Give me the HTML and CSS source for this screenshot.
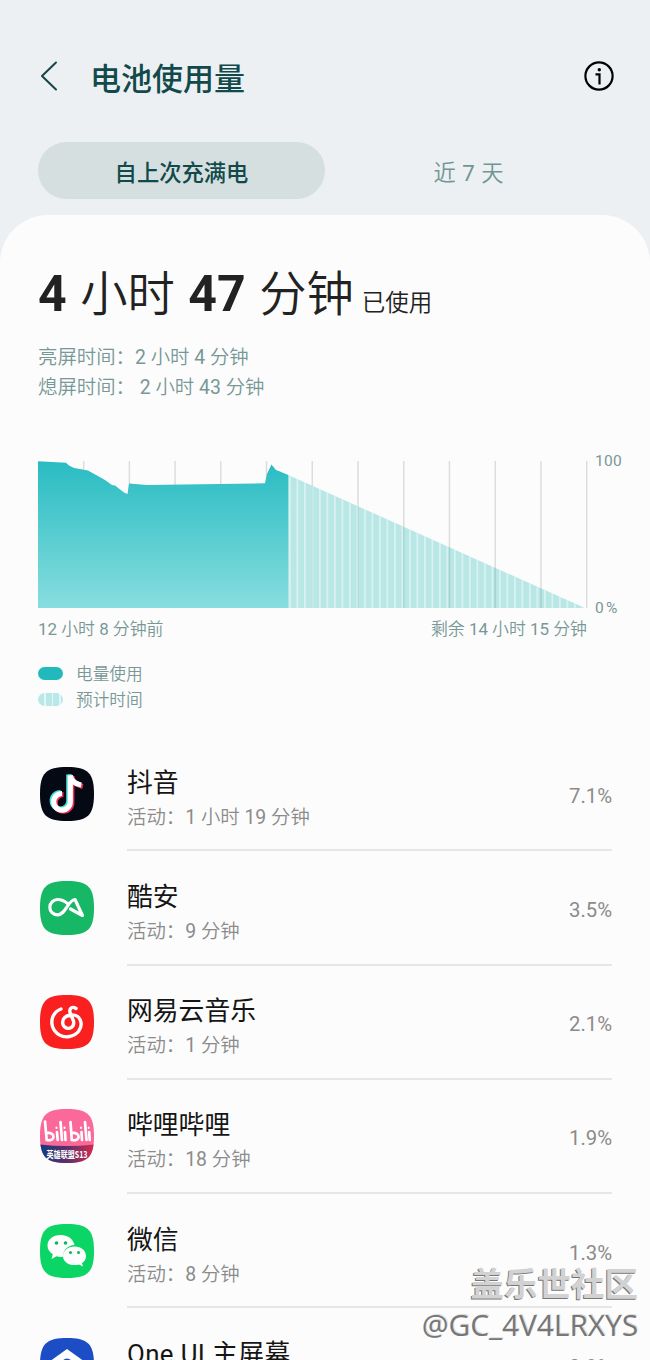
FILE: index.html
```html
<!DOCTYPE html>
<html lang="zh-CN">
<head>
    <meta charset="UTF-8">
    <meta name="viewport" content="width=device-width, initial-scale=1.0">
    <title>电池使用量</title>
    <link rel="stylesheet" href="styles.css">
</head>
<body>

    <div class="header">
        <svg class="back" width="18" height="30" viewBox="0 0 18 30"><path d="M16 1.5 2 15l14 13.5"/></svg>
        <h1>电池使用量</h1>
        <svg class="info" width="30" height="30" viewBox="0 0 30 30">
            <circle cx="15" cy="15" r="13.6"/>
            <path d="M11.5 13.4h4v10.2"/>
            <circle class="dot" cx="15.3" cy="8.7" r="1.7"/>
        </svg>
    </div>

    <div class="tabs">
        <div class="tab active">自上次充满电</div>
        <div class="tab">近 7 天</div>
    </div>

    <div class="content">
        <div class="total"><b>4</b> 小时 <b>47</b> 分钟<span class="used">已使用</span></div>
        <div class="times">
            <p>亮屏时间：2 小时 4 分钟</p>
            <p>熄屏时间： 2 小时 43 分钟</p>
        </div>

        <!-- Graphique de la batterie -->
        <div class="chart">
            <svg width="550" height="148" viewBox="0 0 550 148">
                <defs>
                    <linearGradient id="used" x1="0" y1="0" x2="0" y2="1">
                        <stop offset="0" stop-color="#28bcc2"/>
                        <stop offset="1" stop-color="#88dddf"/>
                    </linearGradient>
                    <clipPath id="remaining"><path d="M250.3 14 547 147H250.3z"/></clipPath>
                </defs>
                <path class="grid" d="M45.7 0v147M91.4 0v147M137.1 0v147M182.8 0v147M228.5 0v147M274.3 0v147M320 0v147M365.8 0v147M411.5 0v147M457.3 0v147M503 0v147M548.8 0v147"/>
                <path fill="url(#used)" d="M0 .3 28 1.8 31 4.5 36 7 50 9.5 67 19 74 24 77 24.5 86 31.5 89.5 33 91 22.5 109 24 227 22.3 229 13 233.5 3.5 238 9 242 10.5 250.3 14V147H0z"/>
                <g clip-path="url(#remaining)">
                    <path fill="#1fb5b0" fill-opacity=".3" d="M250 0h300v147H250z"/>
                    <path class="stripes" d="M251 73.500h300"/>
                </g>
            </svg>
            <div class="scale"><span>100</span><span>0 %</span></div>
        </div>
        <div class="range"><span>12 小时 8 分钟前</span><span>剩余 14 小时 15 分钟</span></div>

        <div class="legend">
            <div><i class="swatch"></i>电量使用</div>
            <div><i class="swatch striped"></i>预计时间</div>
        </div>

        <!-- Liste des applications -->
        <ul class="apps">
            <li>
                <svg class="icon" viewBox="0 0 54 54">
                    <path fill="#050914" d="M27 0C48 0 54 6 54 27S48 54 27 54 0 48 0 27 6 0 27 0z"/>
                    <g fill="none" stroke-width="5.2">
                        <path stroke="#46dcd6" d="M20.500 25.500a8.300 8.300 0 1 0 8.300 8.300V7.500q1.500 8 10 9.500"/>
                        <path stroke="#ec2f58" d="M23.500 27.500a8.300 8.300 0 1 0 8.300 8.300V9.500q1.500 8 11 10"/>
                        <path stroke="#fff" d="M22 26.500a8.300 8.300 0 1 0 8.300 8.300V8.500q1.500 8 11 9.500"/>
                    </g>
                </svg>
                <div class="app">
                    <div><h3>抖音</h3><p>活动：1 小时 19 分钟</p></div>
                    <span>7.1%</span>
                </div>
            </li>
            <li>
                <svg class="icon" viewBox="0 0 54 54">
                    <path fill="#16b765" d="M27 0C48 0 54 6 54 27S48 54 27 54 0 48 0 27 6 0 27 0z"/>
                    <path fill="none" stroke="#fff" stroke-width="3.200" stroke-linejoin="round" stroke-linecap="round" d="M27.500 22.500C24 19.500 21 18.500 17.500 18.500a7.700 7.700 0 0 0 0 15.400C25.500 33.900 28.500 18.500 35 18.500L42.500 34.500 30.500 28"/>
                </svg>
                <div class="app">
                    <div><h3>酷安</h3><p>活动：9 分钟</p></div>
                    <span>3.5%</span>
                </div>
            </li>
            <li>
                <svg class="icon" viewBox="0 0 54 54">
                    <path fill="#f9201f" d="M27 0C48 0 54 6 54 27S48 54 27 54 0 48 0 27 6 0 27 0z"/>
                    <path fill="none" stroke="#fff" stroke-width="3.400" stroke-linecap="round" d="M21 14C13 17 10.500 25 12.500 31.500 15 39 22.500 43 29.500 41.500 37.500 40 42 33.500 41 27.500 40 22 35.500 19.500 31 20c-6 .5-9 4.500-8.200 8.800.8 4 5.200 5.700 8.500 3.700 2.500-1.600 2.700-4 2.200-6.500L30 17.500c-1-4.500 2.500-6.500 6-4"/>
                </svg>
                <div class="app">
                    <div><h3>网易云音乐</h3><p>活动：1 分钟</p></div>
                    <span>2.1%</span>
                </div>
            </li>
            <li>
                <svg class="icon" viewBox="0 0 54 54">
                    <defs>
                        <clipPath id="shape"><path d="M27 0C48 0 54 6 54 27S48 54 27 54 0 48 0 27 6 0 27 0z"/></clipPath>
                        <linearGradient id="banner">
                            <stop offset="0" stop-color="#123b80"/>
                            <stop offset=".5" stop-color="#5b3069"/>
                            <stop offset="1" stop-color="#d32b50"/>
                        </linearGradient>
                    </defs>
                    <g clip-path="url(#shape)">
                        <path fill="#fb699b" d="M0 0h54v54H0z"/>
                        <path fill="url(#banner)" d="M0 35.500q27 3 54 0V54H0z"/>
                    </g>
                    <g fill="none" stroke="#fff" stroke-width="2.700" stroke-linecap="round">
                        <path d="M5 12.500l1.700 18.500c9 2 9-8 .3-7M17 23l.7 8M20.500 13l1.500 18M25 23l.5 8M30.500 13l1.300 18c9 2 9-8 .3-7M41.500 23l.5 8M45 13l1.500 18M49.200 23l.5 8"/>
                        <path stroke-width="2" d="M16.500 18.500v.5M24.500 18.500v.5M41 18.500v.5M48.700 18.500v.5"/>
                    </g>
                    <text class="season" x="27" y="48.500" text-anchor="middle" textLength="41" lengthAdjust="spacingAndGlyphs">英雄联盟S13</text>
                </svg>
                <div class="app">
                    <div><h3>哔哩哔哩</h3><p>活动：18 分钟</p></div>
                    <span>1.9%</span>
                </div>
            </li>
            <li>
                <svg class="icon" viewBox="0 0 54 54">
                    <path fill="#0bd564" d="M27 0C48 0 54 6 54 27S48 54 27 54 0 48 0 27 6 0 27 0z"/>
                    <path fill="#fff" d="M20.500 11C13 11 7.500 15.500 7.500 21.500c0 4 2 6.700 5.300 8.700L11.500 35l5-2.700c2 .5 4 .7 6.500.5 0-7 5-11.300 11.500-11.800C33 14.500 27.500 11 20.500 11z"/>
                    <path fill="#fff" d="M34.500 22.500c6.500 0 11.500 4 11.500 9.500 0 3.200-1.500 5.500-4 7.200l1 3.300-4-2c-1.500.4-3 .6-4.500.6-6.500 0-11.500-4-11.500-9.200s5-9.400 11.500-9.400z"/>
                    <g fill="#0bb65a"><circle cx="16.500" cy="19" r="1.800"/><circle cx="25.500" cy="19" r="1.800"/><circle cx="30.500" cy="28.500" r="1.500"/><circle cx="38.500" cy="28.500" r="1.500"/></g>
                </svg>
                <div class="app">
                    <div><h3>微信</h3><p>活动：8 分钟</p></div>
                    <span>1.3%</span>
                </div>
            </li>
            <li>
                <svg class="icon" viewBox="0 0 54 54">
                    <path fill="#1d4dc5" d="M27 0C48 0 54 6 54 27S48 54 27 54 0 48 0 27 6 0 27 0z"/>
                    <path fill="#fff" d="M27 11 43 22.500V42H11V22.500z"/>
                    <circle cx="27" cy="26" r="5.500" fill="#1d4dc5"/>
                </svg>
                <div class="app">
                    <div><h3 class="latin">One UI 主屏幕</h3></div>
                    <span>0.9%</span>
                </div>
            </li>
        </ul>
    </div>

    <div class="watermark">
        <div class="community">盖乐世社区</div>
        <div class="user">@GC_4V4LRXYS</div>
    </div>

</body>
</html>
```
FILE: styles.css
```css
* {
    box-sizing: border-box;
    margin: 0;
    padding: 0;
}

body {
    position: relative;
    height: 1360px;
    overflow: hidden;
    background-color: #ecf0f3;
    font-family: Roboto, 'Noto Sans CJK SC DemiLight', 'Noto Sans CJK SC', sans-serif;
}

.header {
    height: 142px;
    padding: 55px 36px 0 40px;
    display: flex;
    align-items: flex-start;
}

.header h1 {
    margin: 0 auto 0 32px;
    font-family: Roboto, 'Noto Sans CJK SC', sans-serif;
    font-size: 31px;
    line-height: 49px;
    font-weight: 500;
    color: #124a4b;
}

.back {
    margin-top: 6px;
    fill: none;
    stroke: #164546;
    stroke-width: 2;
    stroke-linecap: round;
    stroke-linejoin: round;
}

.info {
    margin-top: 6px;
    fill: none;
    stroke: #000;
    stroke-width: 2.2;
}

.info .dot {
    fill: #000;
    stroke: none;
}

.tabs {
    display: flex;
    height: 57px;
    margin: 0 38px 16px;
}

.tab {
    width: 287px;
    height: 57px;
    line-height: 62px;
    border-radius: 29px;
    text-align: center;
    font-size: 22.3px;
    word-spacing: 1px;
    color: #6f9693;
}

.tab.active {
    background-color: #d6dfe0;
    font-family: Roboto, 'Noto Sans CJK SC', sans-serif;
    color: #124a4b;
    font-weight: 500;
}

.content {
    height: 1145px;
    overflow: hidden;
    padding: 44px 28px 0 38px;
    background-color: #fcfcfc;
    border-radius: 48px 48px 0 0;
}

.total {
    height: 70px;
    line-height: 70px;
    font-size: 47.3px;
    font-weight: 350;
    word-spacing: 2px;
    color: #222;
    white-space: nowrap;
}

.total b {
    font-size: 50px;
    font-weight: 700;
}

.used {
    margin-left: 8px;
    font-size: 23.5px;
}

.times {
    margin-top: 14px;
    font-size: 19.4px;
    line-height: 30px;
    color: #789897;
}

.chart {
    display: flex;
    margin-top: 58px;
    height: 148px;
}

.grid {
    fill: none;
    stroke: #ddd;
    stroke-width: 1.5;
}

.stripes {
    stroke: #fff;
    stroke-opacity: 0.45;
    stroke-width: 147;
    stroke-dasharray: 1.8 5.7;
}

.scale {
    display: flex;
    flex-direction: column;
    justify-content: space-between;
    margin: -10px 0 -9px 7px;
    font-size: 15.5px;
    line-height: 20px;
    letter-spacing: 0.3px;
    color: #789897;
    white-space: nowrap;
}

.scale span:last-child {
    word-spacing: -2px;
}

.range {
    display: flex;
    justify-content: space-between;
    width: 549px;
    margin-top: 7px;
    font-size: 16.9px;
    line-height: 26px;
    color: #789897;
}

.legend {
    margin-top: 20px;
    font-size: 16.7px;
    line-height: 26px;
    color: #789897;
}

.legend div {
    display: flex;
    align-items: center;
}

.swatch {
    width: 25px;
    height: 13px;
    margin: -4px 13px 0 0;
    border-radius: 7px;
    background-color: #22b9bd;
}

.swatch.striped {
    background: repeating-linear-gradient(90deg, #b9e8e8 0 6px, #e3f6f6 6px 7.5px);
}

.apps {
    margin-top: 23px;
    list-style: none;
}

.apps li {
    display: flex;
    height: 114.3px;
    padding-left: 1.5px;
}

.icon {
    flex: none;
    width: 54px;
    height: 54px;
    margin: 29.5px 33.5px 0 0;
}

.season {
    font-family: 'Noto Sans CJK SC', sans-serif;
    font-size: 9.5px;
    font-weight: bold;
    fill: #fff;
}

.app {
    display: flex;
    justify-content: space-between;
    width: 485px;
    padding-top: 26.5px;
    border-bottom: 2px solid #e6e6e6;
}

.app h3 {
    font-family: Roboto, 'Noto Sans CJK SC', sans-serif;
    font-size: 25.8px;
    line-height: 38px;
    font-weight: normal;
    color: #151515;
}

.app .latin {
    letter-spacing: 0.4px;
}

.app p {
    font-size: 19.4px;
    line-height: 31px;
    color: #8b8b8b;
}

.app span {
    margin-top: 17px;
    font-size: 20.3px;
    line-height: 30px;
    color: #8b8b8b;
}

/* Filigrane */
.watermark {
    position: absolute;
    right: 12px;
    bottom: 14px;
    text-align: right;
    white-space: nowrap;
}

.community {
    font-size: 33.5px;
    line-height: 42px;
    font-weight: bold;
    font-family: 'Noto Sans CJK SC', sans-serif;
    color: #d2d2d2;
    text-shadow: -1px 1px 0 #777;
}

.user {
    font-family: 'Open Sans', 'Noto Sans', sans-serif;
    font-size: 29.8px;
    line-height: 43px;
    color: #777;
    text-shadow: 1px -1px 0 #ddd;
}
```
